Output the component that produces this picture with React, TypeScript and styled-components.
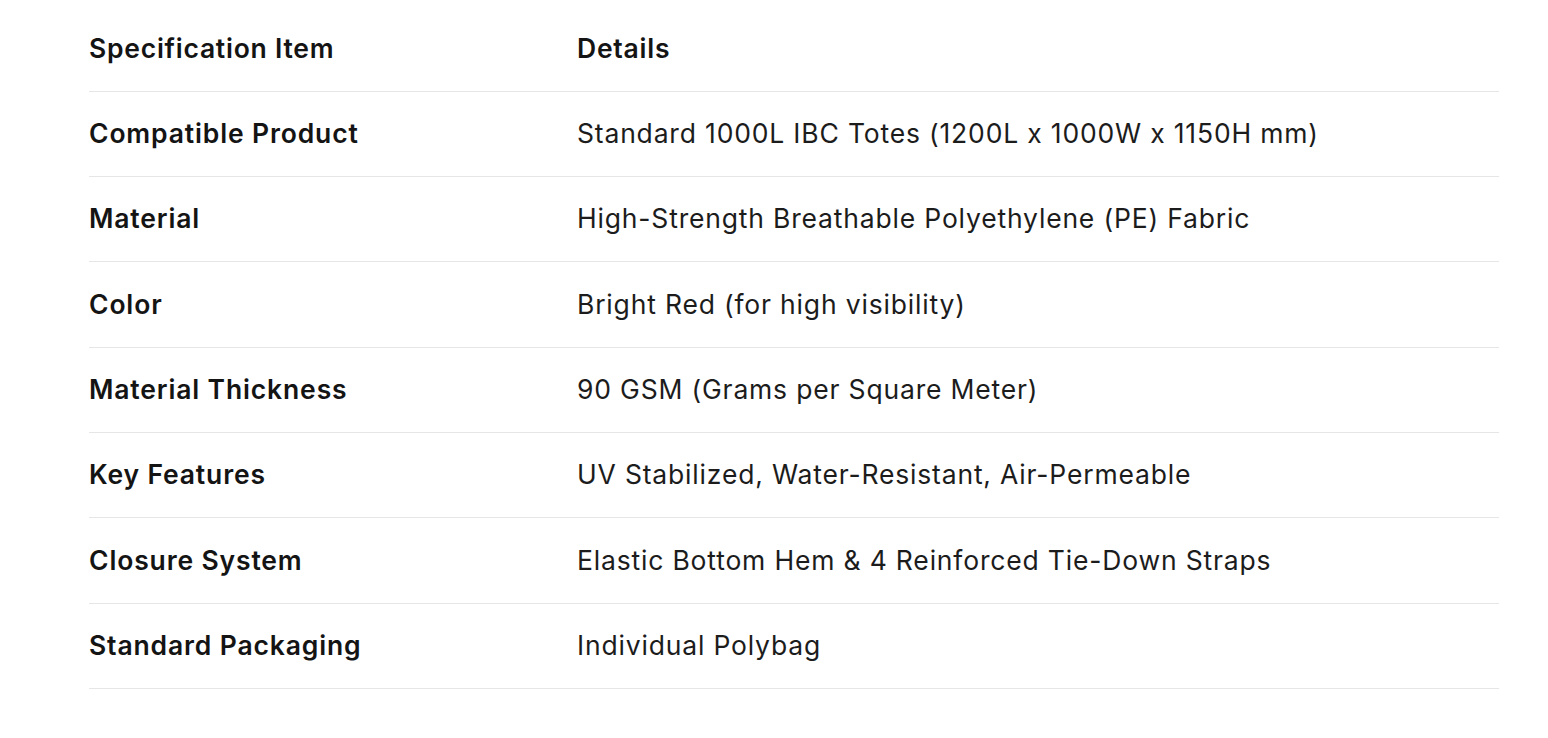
import React from "react";
import styled, { createGlobalStyle } from "styled-components";

const GlobalStyle = createGlobalStyle`
  html, body {
    margin: 0;
    padding: 0;
    background: #ffffff;
  }
  body {
    font-family: Inter, "Noto Sans", "Liberation Sans", sans-serif;
    color: #161616;
    -webkit-font-smoothing: antialiased;
  }
`;

const Page = styled.div`
  padding: 6px 49px 0 89px;
`;

const SpecTable = styled.table`
  width: 100%;
  border-collapse: collapse;
  table-layout: fixed;
`;

const Row = styled.tr`
  height: 85.33px;
  border-bottom: 1px solid #e6e6e6;
`;

const Cell = styled.td<{ $label?: boolean }>`
  padding: 0;
  font-size: 26.5px;
  line-height: 1.5;
  vertical-align: middle;
  font-weight: ${(p) => (p.$label ? 600 : 400)};
  color: ${(p) => (p.$label ? "#141414" : "#1c1c1c")};
  letter-spacing: ${(p) => (p.$label ? "0.85px" : "0.82px")};
`;

const HeadCell = styled.th`
  padding: 0;
  text-align: left;
  font-size: 26.5px;
  line-height: 1.5;
  font-weight: 600;
  color: #141414;
  letter-spacing: 0.75px;
`;

const LabelCol = styled.col`
  width: 488px;
`;

const specs = [
  {
    item: "Compatible Product",
    details: "Standard 1000L IBC Totes (1200L x 1000W x 1150H mm)",
  },
  {
    item: "Material",
    details: "High-Strength Breathable Polyethylene (PE) Fabric",
  },
  { item: "Color", details: "Bright Red (for high visibility)" },
  { item: "Material Thickness", details: "90 GSM (Grams per Square Meter)" },
  {
    item: "Key Features",
    details: "UV Stabilized, Water-Resistant, Air-Permeable",
  },
  {
    item: "Closure System",
    details: "Elastic Bottom Hem & 4 Reinforced Tie-Down Straps",
  },
  { item: "Standard Packaging", details: "Individual Polybag" },
];

const App = () => {
  return (
    <>
      <GlobalStyle />
      <Page>
        <SpecTable>
          <colgroup>
            <LabelCol />
            <col />
          </colgroup>
          <thead>
            <Row>
              <HeadCell>Specification Item</HeadCell>
              <HeadCell>Details</HeadCell>
            </Row>
          </thead>
          <tbody>
            {specs.map((s) => (
              <Row key={s.item}>
                <Cell $label>{s.item}</Cell>
                <Cell>{s.details}</Cell>
              </Row>
            ))}
          </tbody>
        </SpecTable>
      </Page>
    </>
  );
};

export default App;
